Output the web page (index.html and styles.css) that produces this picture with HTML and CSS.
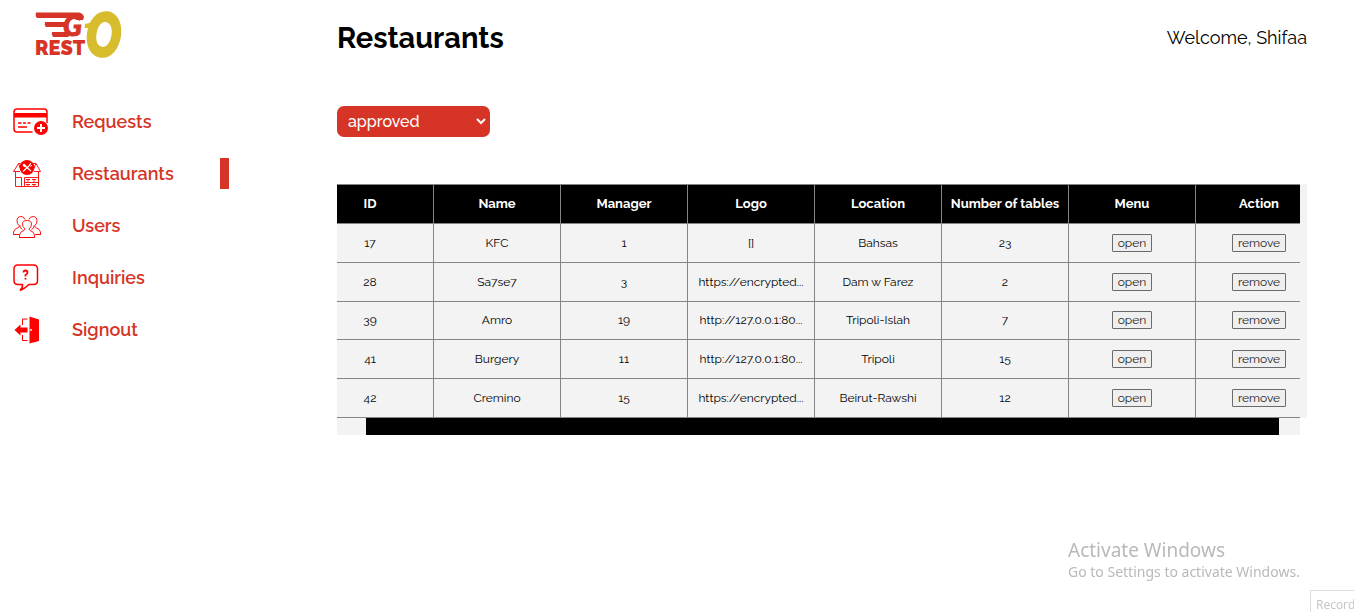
FILE: index.html
```html
<!DOCTYPE html>
<html lang="en">
<head>
<meta charset="utf-8">
<title>Restaurants</title>
<link rel="stylesheet" href="styles.css">
</head>
<body>
<div class="layout">
  <aside class="sidebar">
    <a class="logo" href="#" aria-label="Resto Go">
      <svg width="88" height="50" viewBox="35 10 88 50">
        <g fill="#d63426">
          <path d="M36 12.500H79Q83 13 84 17L83 20H76Q75 18 73 18H37Q35 16 36 12.500ZM45 22H66L65 27H46Q44 25 45 22ZM52 32H66L69 37H53Q51 34 52 32Z"/>
          <text class="logo-g" x="63" y="36">G</text>
          <text class="logo-text" x="35" y="55">REST</text>
        </g>
        <g transform="rotate(10 104 34.500)">
          <path fill="#d7bd2e" fill-rule="evenodd" d="M104 11C114 11 121 21 121 34.500S114 58 104 58S87 48 87 34.500S94 11 104 11ZM104 22C99.500 22 96.500 27 96.500 34.500S99.500 47 104 47S111.500 42 111.500 34.500S108.500 22 104 22Z"/>
        </g>
        <path fill="#d7bd2e" d="M85 24L93 22L91 30L88 28H84.500Z"/>
      </svg>
    </a>
    <nav class="nav">
      <a class="nav-item" href="#">
        <svg class="icon-wide" viewBox="0 0 36 28" fill="none" stroke="#f00">
          <path d="M34 15V4Q34 1 31 1H4Q1 1 1 4V21Q1 24 4 24H19.500" stroke-width="1.500"/>
          <path d="M1 5H34V9.500H1Z" fill="#f00" stroke="none"/>
          <path d="M5 15H8.500M10 15H13M14.500 15H17.500M5 19H14" stroke-width="1.500"/>
          <circle cx="28" cy="20" r="7" fill="#f00" stroke="none"/>
          <path d="M28 16V24M24 20H32" stroke="#fff" stroke-width="2"/>
        </svg>
        <span>Requests</span>
      </a>
      <a class="nav-item active" href="#" aria-current="page">
        <svg class="icon" viewBox="0 0 28 28" fill="none" stroke="#f00">
          <path d="M7.500 3.500H5.500L.5 11.500H7M20 3.500H23L27.500 11.500H21M2.500 11.500V26.500H25.500V11.500M5.500 3.500L8 10M23 3.500L20 10M2.500 17.500H8.500V26.500M11.500 26.500V17.500H25.500M11.500 22.500H25.500M13 19.500H17M19 19.500H23M13 24.500H17M19 24.500H23" stroke-width="0.900"/>
          <path d="M15 19V22M21 19V22M15 24V26M21 24V26" stroke-width="0.800"/>
          <circle cx="14" cy="7.500" r="7.500" fill="#f00" stroke="none"/>
          <path d="M11 5L18 11M17.500 4.500L10 11.500" stroke="#fff" stroke-width="1.200"/>
          <ellipse cx="11.500" cy="5.500" rx="2" ry="1.400" transform="rotate(40 11.500 5.500)" fill="#fff" stroke="none"/>
          <path d="M16 5L18 3M17.500 6.500L19 5" stroke="#fff"/>
        </svg>
        <span>Restaurants</span>
      </a>
      <a class="nav-item" href="#">
        <svg class="icon" viewBox="0 0 28 28" fill="none" stroke="#f00" stroke-width="0.900">
          <path d="M6.500 25.500V23Q7 19.500 11 18.500L12 17Q9.500 15 9.500 12Q9.500 8.500 14 8.500T18.500 12Q18.500 15 16 17L17 18.500Q21 19.500 21.500 23V25.500Z"/>
          <path d="M6 22.500H.5V20Q1 17 5.500 15.500L6.500 14Q4 12 4 9Q4 4.500 8 4.500Q11 4.500 12 7.500M7 13.500Q6 15.500 9.500 17.500M22.500 22.500H27.500V20Q27 17 22.500 15.500L21.500 14Q24 12 24 9Q24 4.500 20 4.500Q17 4.500 16 7.500M21 13.500Q22 15.500 18.500 17.500"/>
          <path d="M6.500 25.500H21.500M.5 22.500H6M22.500 22.500H27.500" stroke-width="1.200"/>
        </svg>
        <span>Users</span>
      </a>
      <a class="nav-item" href="#">
        <svg class="icon" viewBox="0 0 28 28" fill="none" stroke="#f00" stroke-width="1.500">
          <path d="M5 1H20.500Q24.500 1 24.500 5V16.500Q24.500 20.500 20.500 20.500H16Q12 24.500 7 26.500Q10 23.500 9.500 20.500H5Q1 20.500 1 16.500V5Q1 1 5 1Z"/>
          <path d="M10.500 8.500Q10.500 6.500 12.500 6.500T14.500 8.500Q14.500 10 12.500 11V12.500M12.500 14V15.500" stroke-width="1.800"/>
        </svg>
        <span>Inquiries</span>
      </a>
      <a class="nav-item" href="#">
        <svg class="icon" viewBox="0 0 28 28" fill="#f00">
          <path d="M16.500.5L26 3.500V25L16.500 27.500ZM1.500 14L7.500 8.500V11.500H14.500V16.500H7.500V19.500Z"/>
          <path d="M14.500 3H9.500V9M9.500 19V24.500H14.500" fill="none" stroke="#f00"/>
          <circle cx="18" cy="14" r="0.900" fill="#fff"/>
        </svg>
        <span>Signout</span>
      </a>
    </nav>
  </aside>
  <main class="main">
    <header class="topbar">
      <h1 class="title">Restaurants</h1>
      <span class="welcome">Welcome, Shifaa</span>
    </header>
    <div class="filter">
      <select class="status" aria-label="Status">
        <option selected>approved</option>
      </select>
      <svg class="chevron" viewBox="0 0 10 7" fill="none" stroke="#fff" stroke-width="2"><path d="M1 1L5 5L9 1"/></svg>
    </div>
    <section class="table-panel">
      <div class="table-view">
        <table class="table">
          <thead>
            <tr><th>ID</th><th>Name</th><th>Manager</th><th>Logo</th><th>Location</th><th>Number of tables</th><th>Menu</th><th>Action</th></tr>
          </thead>
          <tbody>
            <tr><td>17</td><td>KFC</td><td>1</td><td>[]</td><td>Bahsas</td><td>23</td><td><button class="btn">open</button></td><td><button class="btn">remove</button></td></tr>
            <tr><td>28</td><td>Sa7se7</td><td>3</td><td>https://encrypted...</td><td>Dam w Farez</td><td>2</td><td><button class="btn">open</button></td><td><button class="btn">remove</button></td></tr>
            <tr><td>39</td><td>Amro</td><td>19</td><td>http://127.0.0.1:80...</td><td>Tripoli-Islah</td><td>7</td><td><button class="btn">open</button></td><td><button class="btn">remove</button></td></tr>
            <tr><td>41</td><td>Burgery</td><td>11</td><td>http://127.0.0.1:80...</td><td>Tripoli</td><td>15</td><td><button class="btn">open</button></td><td><button class="btn">remove</button></td></tr>
            <tr><td>42</td><td>Cremino</td><td>15</td><td>https://encrypted...</td><td>Beirut-Rawshi</td><td>12</td><td><button class="btn">open</button></td><td><button class="btn">remove</button></td></tr>
          </tbody>
        </table>
      </div>
    </section>
    <div class="scroll-track"><div class="scroll-thumb"></div></div>
  </main>
</div>
<div class="activation">
  <div class="activation-title">Activate Windows</div>
  <div class="activation-text">Go to Settings to activate Windows.</div>
</div>
<div class="record">Record</div>
</body>
</html>
```
FILE: styles.css
```css
* { box-sizing: border-box; }
body {
  margin: 0;
  background: #fff;
  color: #000;
  font-family: Raleway, Lato, sans-serif;
  overflow: hidden;
}
.layout {
  display: grid;
  grid-template-columns: 229px 1fr;
  min-height: 100vh;
}
.logo { display: block; height: 106px; padding: 10px 0 0 35px; }
.logo svg { display: block; }
.logo-text { font: 900 20px Raleway, Lato, sans-serif; }
.logo-g { font: italic 900 28px Lato, sans-serif; stroke: #d63426; stroke-width: 1px; }
.nav { display: flex; flex-direction: column; gap: 21px; }
.nav-item {
  display: grid;
  grid-template-columns: 59px 1fr;
  align-items: center;
  height: 31px;
  padding-left: 13px;
  color: #d63426;
  font-size: 18px;
  font-weight: 600;
  text-decoration: none;
}
.nav-item.active { border-right: 9px solid #d63426; }
.icon { width: 28px; height: 28px; }
.icon-wide { width: 36px; height: 28px; }
.main { padding: 0 47px 0 108px; min-width: 0; }
.topbar {
  display: flex;
  justify-content: space-between;
  align-items: center;
  height: 75px;
}
.title { margin: 0; font-size: 29px; font-weight: 700; }
.welcome { font-size: 18px; }
.filter { position: relative; width: 153px; margin-top: 31px; }
.status {
  display: block;
  appearance: none;
  width: 100%;
  height: 31px;
  padding: 0 11px;
  border: 0;
  border-radius: 7px;
  background: #d63426;
  color: #fff;
  font: 500 16px Raleway, Lato, sans-serif;
}
.chevron { position: absolute; right: 4px; top: 12px; width: 10px; height: 7px; pointer-events: none; }
.table-panel { margin-top: 47px; padding-right: 7px; background: #f3f3f3; }
.table-view { overflow: hidden; }
.table {
  width: 1017px;
  height: 234px;
  margin-left: -31px;
  border-collapse: collapse;
  table-layout: fixed;
  font-size: 12px;
}
.table th, .table td {
  padding: 0 4px;
  border: 1px solid #858585;
  text-align: center;
  white-space: nowrap;
}
.table th { height: 39px; padding-bottom: 2px; background: #000; color: #fff; font-size: 13px; font-weight: 700; }
.btn {
  display: inline-block;
  height: 18px;
  padding: 0 5px;
  border: 1px solid #6b6b6b;
  border-radius: 1px;
  background: #efefef;
  color: #222;
  font: 12px/16px Raleway, Lato, sans-serif;
  vertical-align: middle;
}
.scroll-track { margin-right: 7px; height: 17px; background: #f3f3f3; }
.scroll-thumb { width: 94.8%; height: 100%; margin-left: 3%; background: #000; }
.activation {
  position: fixed;
  right: 50px;
  bottom: 30px;
  min-width: 236px;
  color: #b9b9b9;
  font-family: "Segoe UI", "Noto Sans", sans-serif;
}
.activation-title { font-size: 19px; line-height: 24px; }
.activation-text { font-size: 14px; line-height: 20px; }
.record {
  position: fixed;
  right: 0;
  bottom: 0;
  width: 44px;
  height: 22px;
  padding-left: 5px;
  border: 1px solid #ddd;
  border-width: 1px 0 0 1px;
  color: #c4c4c4;
  font: 12px/28px "Segoe UI", "Open Sans", sans-serif;
  overflow: hidden;
}
```
